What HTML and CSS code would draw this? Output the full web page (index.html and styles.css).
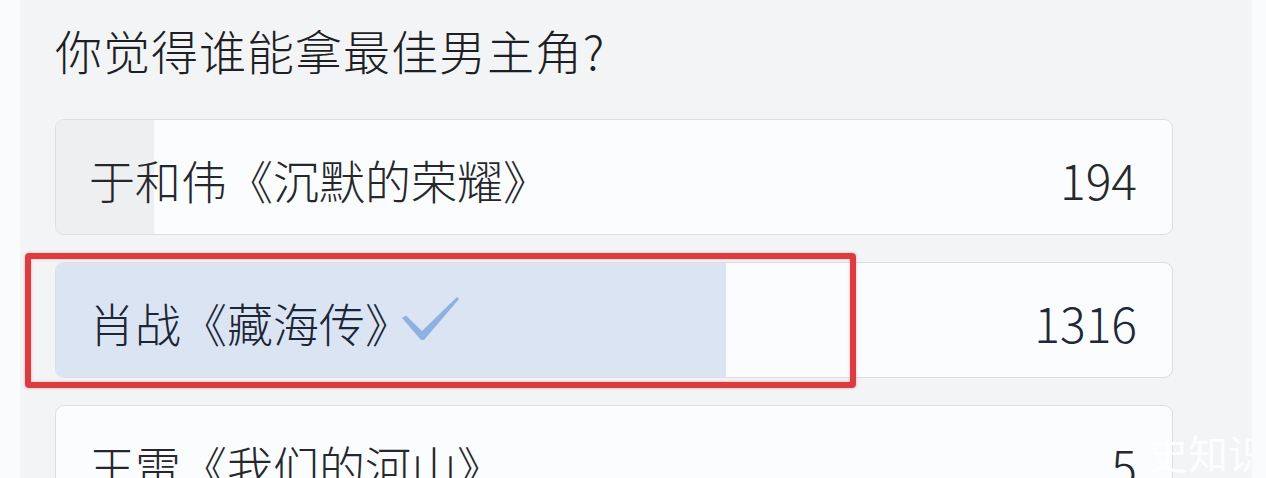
FILE: index.html
```html
<!DOCTYPE html>
<html lang="zh">
<head>
<meta charset="utf-8">
<title>投票</title>
<link rel="stylesheet" href="styles.css">
</head>
<body>
<div class="panel">
  <h1 class="title">你觉得谁能拿最佳男主角?</h1>
  <div class="options">
    <div class="option">
      <div class="fill" style="width:98px"></div>
      <span class="label">于和伟《沉默的荣耀》</span>
      <span class="count">194</span>
    </div>
    <div class="option chosen">
      <div class="fill" style="width:670px"></div>
      <span class="label">肖战《藏海传》<svg class="check" width="60" height="48" viewBox="0 0 60 48"><path d="M1 22 L5 19.5 L21 35 L56 1 L58 3 L23 44 L20 44 Z" fill="#8fb1e2"/></svg></span>
      <span class="count">1316</span>
      <div class="highlight"></div>
    </div>
    <div class="option">
      <span class="label">王雷《我们的河山》</span>
      <span class="count">5</span>
    </div>
  </div>
  <div class="watermark">史知识</div>
</div>
</body>
</html>
```
FILE: styles.css
```css
html, body {
  margin: 0;
  padding: 0;
}
body {
  background: #fafbfc;
  width: 1266px;
  height: 478px;
  overflow: hidden;
  font-family: "Noto Sans CJK SC", "Noto Sans", sans-serif;
}
.panel {
  position: relative;
  margin-left: 20px;
  width: 1232px;
  height: 478px;
  background: #f3f4f6;
  padding: 22px 0 0 35px;
  box-sizing: border-box;
  overflow: hidden;
}
.title {
  margin: 0;
  font-size: 47px;
  font-weight: 300;
  line-height: 56px;
  color: #1d1f24;
  letter-spacing: 1px;
}
.options {
  margin-top: 41px;
  display: flex;
  flex-direction: column;
  gap: 27px;
}
.option {
  position: relative;
  flex: none;
  width: 1118px;
  height: 116px;
  box-sizing: border-box;
  border: 1px solid #dcdee2;
  border-radius: 9px;
  background: #fbfcfd;
  display: flex;
  align-items: center;
  justify-content: space-between;
  padding: 4px 35px 0 33px;
}
.fill {
  position: absolute;
  left: 0;
  top: 0;
  bottom: 0;
  background: #eeeff1;
  border-radius: 8px 0 0 8px;
}
.chosen .fill {
  background: #dbe4f2;
}
.label {
  position: relative;
  display: flex;
  align-items: center;
  font-size: 46px;
  font-weight: 300;
  line-height: 1;
  color: #25272c;
}
.chosen .label {
  color: #1c2536;
}
.check {
  margin-left: -10px;
  margin-top: -4px;
}
.count {
  position: relative;
  font-size: 48px;
  font-weight: 300;
  line-height: 1;
  color: #26282d;
}
.chosen .count {
  color: #1f2838;
}
.highlight {
  position: absolute;
  left: -31px;
  top: -10px;
  width: 831px;
  height: 135px;
  box-sizing: border-box;
  border: 6px solid #dc3b3f;
  border-radius: 4px;
  box-shadow: 0 0 3px rgba(230, 80, 80, 0.45), inset 0 0 3px rgba(230, 80, 80, 0.45);
}
.watermark {
  position: absolute;
  left: 1128px;
  top: 432px;
  font-size: 40px;
  line-height: 1;
  color: rgba(255, 255, 255, 0.92);
  white-space: nowrap;
}
```
